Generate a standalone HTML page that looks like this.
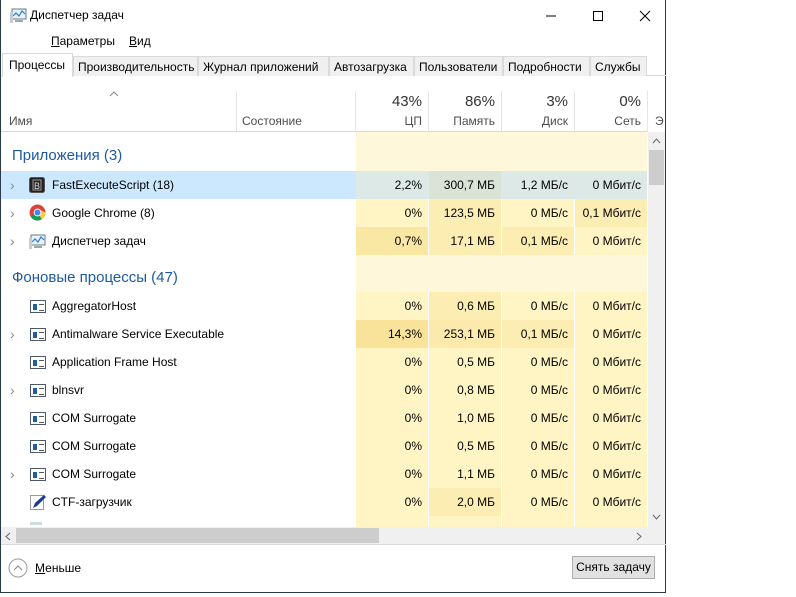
<!DOCTYPE html>
<html><head><meta charset="utf-8"><style>
*{box-sizing:border-box;margin:0;padding:0}
body{width:796px;height:597px;background:#fff;font-family:"Liberation Sans","Noto Sans CJK SC",sans-serif;font-size:12px;color:#000;position:relative;overflow:hidden}
.a{position:absolute;white-space:nowrap}
.win{position:absolute;left:0;top:0;width:666px;height:593px;border:1px solid #2b3a4a;border-top:none;background:#fff}
.tab{position:absolute;top:56px;height:20px;background:#f0f0f0;border:1px solid #dadada;border-bottom:none;padding:3px 4px 0;font-size:12px}
.c{position:absolute;text-align:right;padding-right:6px;height:28px;line-height:28px}
.nm{position:absolute;left:51px;line-height:28px}
.arr{position:absolute;left:9px;color:#888;line-height:28px;font-size:14px}
.ico{position:absolute;left:29px;width:16px;height:13px;border:1px solid #4a5a6a;background:#fff}
.ico:before{content:"";position:absolute;left:2px;top:3px;width:4px;height:6px;background:#1f5fa0}
.ico:after{content:"";position:absolute;left:8px;top:3px;width:5px;height:5px;border-top:1px solid #555;border-bottom:1px solid #555}
.hd{position:absolute;color:#4d4d4d;text-align:right}
</style></head><body>
<div class="win">
<svg class="a" style="left:9px;top:8px" width="18" height="16" viewBox="0 0 18 16"><rect x="2" y="1" width="14" height="10" fill="#e8f2fb" stroke="#6a7a8a"/><polyline points="3,8 6,5 9,8 12,3 15,6" fill="none" stroke="#2a7ad0" stroke-width="1.2"/><rect x="0" y="4" width="3" height="11" fill="#c8ccd0"/><rect x="5" y="12" width="8" height="2" fill="#9aa"/></svg>
<div class="a" style="left:29px;top:8px;font-size:12px">Диспетчер задач</div>
<svg class="a" style="left:541px;top:9px" width="110" height="14"><line x1="4" y1="7" x2="14" y2="7" stroke="#000"/><rect x="51.5" y="2.5" width="9" height="9" fill="none" stroke="#000"/><path d="M98 2 L108 12 M108 2 L98 12" stroke="#000"/></svg>
<div class="a" style="left:50px;top:34px"><u>П</u>араметры</div>
<div class="a" style="left:128px;top:34px"><u>В</u>ид</div>
<div class="a" style="left:0;top:75px;width:665px;height:1px;background:#dadada"></div>
<div class="tab" style="left:72px;width:125px">Производительность</div>
<div class="tab" style="left:197px;width:131px">Журнал приложений</div>
<div class="tab" style="left:328px;width:85px">Автозагрузка</div>
<div class="tab" style="left:413px;width:89px">Пользователи</div>
<div class="tab" style="left:502px;width:87px">Подробности</div>
<div class="tab" style="left:589px;width:57px">Службы</div>
<div class="a" style="left:1px;top:53px;width:71px;height:24px;background:#fff;border:1px solid #dadada;border-bottom:none;padding:4px 0 0 6px">Процессы</div>
<svg class="a" style="left:108px;top:91px" width="10" height="6"><polyline points="1,5 5,1 9,5" fill="none" stroke="#888"/></svg>
<div class="a" style="left:8px;top:114px;color:#4d4d4d">Имя</div>
<div class="a" style="left:241px;top:114px;color:#4d4d4d">Состояние</div>
<div class="a" style="left:235px;top:91px;width:1px;height:40px;background:#e5e5e5"></div>
<div class="a" style="left:354px;top:91px;width:1px;height:40px;background:#e5e5e5"></div>
<div class="a" style="left:427px;top:91px;width:1px;height:40px;background:#e5e5e5"></div>
<div class="a" style="left:500px;top:91px;width:1px;height:40px;background:#e5e5e5"></div>
<div class="a" style="left:573px;top:91px;width:1px;height:40px;background:#e5e5e5"></div>
<div class="a" style="left:646px;top:91px;width:1px;height:40px;background:#e5e5e5"></div>
<div class="hd" style="left:355px;width:66px;top:93px;font-size:15px;color:#333">43%</div>
<div class="hd" style="left:428px;width:66px;top:93px;font-size:15px;color:#333">86%</div>
<div class="hd" style="left:501px;width:66px;top:93px;font-size:15px;color:#333">3%</div>
<div class="hd" style="left:574px;width:66px;top:93px;font-size:15px;color:#333">0%</div>
<div class="hd" style="left:355px;width:66px;top:114px">ЦП</div>
<div class="hd" style="left:428px;width:66px;top:114px">Память</div>
<div class="hd" style="left:501px;width:66px;top:114px">Диск</div>
<div class="hd" style="left:574px;width:66px;top:114px">Сеть</div>
<div class="a" style="left:654px;top:114px;color:#4d4d4d">Э</div>
<div class="a" style="left:0;top:131px;width:647px;height:1px;background:#dadada"></div>
<div class="a" style="left:355px;top:132px;width:72px;height:395px;background:#fff4c4"></div>
<div class="a" style="left:428px;top:132px;width:72px;height:395px;background:#fff4c4"></div>
<div class="a" style="left:501px;top:132px;width:72px;height:395px;background:#fff4c4"></div>
<div class="a" style="left:574px;top:132px;width:72px;height:395px;background:#fff4c4"></div>
<div class="a" style="left:355px;top:132px;width:291px;height:39px;background:#fff7dc;opacity:.9"></div>
<div class="a" style="left:355px;top:255px;width:291px;height:37px;background:#fff7dc;opacity:.9"></div>
<div class="a" style="left:11px;top:147px;color:#1e5aa0;font-size:15px">Приложения (3)</div>
<div class="a" style="left:11px;top:269px;color:#1e5aa0;font-size:15px">Фоновые процессы (47)</div>
<div class="a" style="left:0;top:171px;width:355px;height:28px;background:#cce8ff"></div>
<div class="a" style="left:355px;top:171px;width:291px;height:28px;background:#dde9e6"></div>
<div class="a" style="left:428px;top:171px;width:72px;height:28px;background:#d9e3d6"></div>
<div class="a" style="left:428px;top:199px;width:72px;height:28px;background:#fcedb2"></div>
<div class="a" style="left:574px;top:199px;width:72px;height:28px;background:#fcedb2"></div>
<div class="a" style="left:355px;top:227px;width:72px;height:28px;background:#f9e8a4"></div>
<div class="a" style="left:428px;top:227px;width:72px;height:28px;background:#fcedb2"></div>
<div class="a" style="left:501px;top:227px;width:72px;height:28px;background:#fcedb2"></div>
<div class="a" style="left:428px;top:292px;width:72px;height:28px;background:#fcedb2"></div>
<div class="a" style="left:355px;top:320px;width:72px;height:28px;background:#f9e39b"></div>
<div class="a" style="left:428px;top:320px;width:72px;height:28px;background:#fbeaab"></div>
<div class="a" style="left:501px;top:320px;width:72px;height:28px;background:#fcedb2"></div>
<div class="a" style="left:428px;top:488px;width:72px;height:28px;background:#fcedb2"></div>

<div class="a" style="left:0;top:171px;width:647px;height:28px">
<span class="arr">›</span>
<svg class="a" style="left:28px;top:6px" width="16" height="16"><rect x="0.5" y="0.5" width="15" height="15" rx="2" fill="#222" stroke="#555"/><rect x="4" y="3" width="8" height="10" fill="none" stroke="#999"/><text x="5" y="12" font-size="9" fill="#ddd" font-family="Liberation Sans">B</text></svg>
<span class="nm">FastExecuteScript (18)</span>
<div class="c" style="left:355px;width:72px">2,2%</div><div class="c" style="left:428px;width:72px">300,7 МБ</div><div class="c" style="left:501px;width:72px">1,2 МБ/с</div><div class="c" style="left:574px;width:72px">0 Мбит/с</div></div>

<div class="a" style="left:0;top:199px;width:647px;height:28px">
<span class="arr">›</span>
<svg class="a" style="left:28px;top:5px" width="17" height="17" viewBox="0 0 16 16"><circle cx="8" cy="8" r="7.5" fill="#db4437"/><path d="M8 8 L1.5 11.7 A7.5 7.5 0 0 0 12 14.4Z" fill="#0f9d58"/><path d="M8 8 L12 14.4 A7.5 7.5 0 0 0 15.5 8 L8 4.5Z" fill="#ffcd40"/><circle cx="8" cy="8" r="3.6" fill="#fff"/><circle cx="8" cy="8" r="2.8" fill="#4285f4"/></svg>
<span class="nm">Google Chrome (8)</span>
<div class="c" style="left:355px;width:72px">0%</div><div class="c" style="left:428px;width:72px">123,5 МБ</div><div class="c" style="left:501px;width:72px">0 МБ/с</div><div class="c" style="left:574px;width:72px">0,1 Мбит/с</div></div>

<div class="a" style="left:0;top:227px;width:647px;height:28px">
<span class="arr">›</span>
<svg class="a" style="left:28px;top:7px" width="18" height="16" viewBox="0 0 18 16"><rect x="2" y="1" width="14" height="10" fill="#e8f2fb" stroke="#6a7a8a"/><polyline points="3,8 6,5 9,8 12,3 15,6" fill="none" stroke="#2a7ad0" stroke-width="1.2"/><rect x="0" y="4" width="3" height="11" fill="#c8ccd0"/><rect x="5" y="12" width="8" height="2" fill="#9aa"/></svg>
<span class="nm">Диспетчер задач</span>
<div class="c" style="left:355px;width:72px">0,7%</div><div class="c" style="left:428px;width:72px">17,1 МБ</div><div class="c" style="left:501px;width:72px">0,1 МБ/с</div><div class="c" style="left:574px;width:72px">0 Мбит/с</div></div>

<div class="a" style="left:0;top:292px;width:647px;height:28px"><span class="ico" style="top:8px"></span><span class="nm">AggregatorHost</span>
<div class="c" style="left:355px;width:72px">0%</div><div class="c" style="left:428px;width:72px">0,6 МБ</div><div class="c" style="left:501px;width:72px">0 МБ/с</div><div class="c" style="left:574px;width:72px">0 Мбит/с</div></div>

<div class="a" style="left:0;top:320px;width:647px;height:28px"><span class="arr">›</span><span class="ico" style="top:8px"></span><span class="nm">Antimalware Service Executable</span>
<div class="c" style="left:355px;width:72px">14,3%</div><div class="c" style="left:428px;width:72px">253,1 МБ</div><div class="c" style="left:501px;width:72px">0,1 МБ/с</div><div class="c" style="left:574px;width:72px">0 Мбит/с</div></div>

<div class="a" style="left:0;top:348px;width:647px;height:28px"><span class="ico" style="top:8px"></span><span class="nm">Application Frame Host</span>
<div class="c" style="left:355px;width:72px">0%</div><div class="c" style="left:428px;width:72px">0,5 МБ</div><div class="c" style="left:501px;width:72px">0 МБ/с</div><div class="c" style="left:574px;width:72px">0 Мбит/с</div></div>

<div class="a" style="left:0;top:376px;width:647px;height:28px"><span class="arr">›</span><span class="ico" style="top:8px"></span><span class="nm">blnsvr</span>
<div class="c" style="left:355px;width:72px">0%</div><div class="c" style="left:428px;width:72px">0,8 МБ</div><div class="c" style="left:501px;width:72px">0 МБ/с</div><div class="c" style="left:574px;width:72px">0 Мбит/с</div></div>

<div class="a" style="left:0;top:404px;width:647px;height:28px"><span class="ico" style="top:8px"></span><span class="nm">COM Surrogate</span>
<div class="c" style="left:355px;width:72px">0%</div><div class="c" style="left:428px;width:72px">1,0 МБ</div><div class="c" style="left:501px;width:72px">0 МБ/с</div><div class="c" style="left:574px;width:72px">0 Мбит/с</div></div>

<div class="a" style="left:0;top:432px;width:647px;height:28px"><span class="ico" style="top:8px"></span><span class="nm">COM Surrogate</span>
<div class="c" style="left:355px;width:72px">0%</div><div class="c" style="left:428px;width:72px">0,5 МБ</div><div class="c" style="left:501px;width:72px">0 МБ/с</div><div class="c" style="left:574px;width:72px">0 Мбит/с</div></div>

<div class="a" style="left:0;top:460px;width:647px;height:28px"><span class="arr">›</span><span class="ico" style="top:8px"></span><span class="nm">COM Surrogate</span>
<div class="c" style="left:355px;width:72px">0%</div><div class="c" style="left:428px;width:72px">1,1 МБ</div><div class="c" style="left:501px;width:72px">0 МБ/с</div><div class="c" style="left:574px;width:72px">0 Мбит/с</div></div>

<div class="a" style="left:0;top:488px;width:647px;height:28px">
<svg class="a" style="left:29px;top:6px" width="16" height="17"><rect x="0.5" y="1.5" width="13" height="14" fill="#fff" stroke="#333" stroke-dasharray="1,1"/><path d="M3 14 L5 9 L14 1 L16 3 L7 12Z" fill="#1e3c8c"/></svg>
<span class="nm">CTF-загрузчик</span>
<div class="c" style="left:355px;width:72px">0%</div><div class="c" style="left:428px;width:72px">2,0 МБ</div><div class="c" style="left:501px;width:72px">0 МБ/с</div><div class="c" style="left:574px;width:72px">0 Мбит/с</div></div>
<div class="a" style="left:29px;top:522px;width:12px;height:3px;background:#cdd"></div>

<div class="a" style="left:647px;top:132px;width:17px;height:395px;background:#f0f0f0"></div>
<svg class="a" style="left:651px;top:138px" width="9" height="6"><polyline points="1,5 4.5,1 8,5" fill="none" stroke="#666"/></svg>
<div class="a" style="left:648px;top:150px;width:15px;height:35px;background:#cdcdcd"></div>
<svg class="a" style="left:651px;top:514px" width="9" height="6"><polyline points="1,1 4.5,5 8,1" fill="none" stroke="#666"/></svg>
<div class="a" style="left:0;top:527px;width:647px;height:17px;background:#f0f0f0"></div>
<div class="a" style="left:15px;top:528px;width:363px;height:15px;background:#cdcdcd"></div>
<svg class="a" style="left:4px;top:532px" width="6" height="9"><polyline points="5,1 1,4.5 5,8" fill="none" stroke="#666"/></svg>
<svg class="a" style="left:635px;top:532px" width="6" height="9"><polyline points="1,1 5,4.5 1,8" fill="none" stroke="#666"/></svg>
<div class="a" style="left:647px;top:527px;width:17px;height:17px;background:#f0f0f0"></div>
<div class="a" style="left:0;top:544px;width:665px;height:1px;background:#dadada"></div>
<svg class="a" style="left:7px;top:558px" width="20" height="20"><circle cx="10" cy="10" r="9" fill="none" stroke="#999"/><polyline points="6,12 10,8 14,12" fill="none" stroke="#888"/></svg>
<div class="a" style="left:34px;top:561px"><u>М</u>еньше</div>
<div class="a" style="left:571px;top:556px;width:83px;height:23px;background:#e1e1e1;border:1px solid #adadad;text-align:center;line-height:21px">Снять за<u>д</u>ачу</div>
</div>
</body></html>
